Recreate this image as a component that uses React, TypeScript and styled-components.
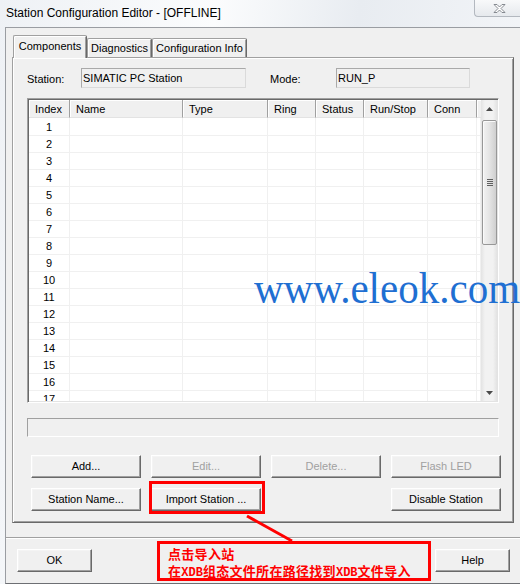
import React from 'react';
import styled, { createGlobalStyle } from 'styled-components';

const Global = createGlobalStyle`
  html, body { margin: 0; padding: 0; }
  body {
    width: 520px; height: 584px; overflow: hidden;
    background: #f3f5f8;
    font-family: "Liberation Sans", Arial, sans-serif;
    font-size: 11px; color: #000;
  }
`;

const Window = styled.div`
  position: relative;
  width: 520px;
  height: 584px;
  overflow: hidden;
  display: flex;
  flex-direction: column;
  background: linear-gradient(100deg, #eef1f5 0%, #fbfcfd 35%, #e8ecf1 58%, #f8f9fb 100%);
`;

const TitleBar = styled.div`
  height: 27px;
  flex: none;
  display: flex;
  align-items: flex-start;
  padding-left: 6px;
  box-sizing: border-box;
`;

const Title = styled.div`
  padding-top: 5px;
  font-size: 12px;
  line-height: 16px;
  color: #000;
`;

const CloseButton = styled.div`
  margin-left: auto;
  width: 46px;
  height: 17px;
  box-sizing: border-box;
  border: 1px solid #b3b8bf;
  border-top: none;
  border-right: none;
  border-bottom-left-radius: 4px;
  background: linear-gradient(#f8f9fa, #e6e9ed);
  display: flex;
  align-items: center;
  justify-content: center;
  padding-left: 4px;
`;

const Body = styled.div`
  flex: 1;
  margin-left: 5px;
  border-left: 1px solid #9a9da2;
  border-top: 1px solid #9a9da2;
  border-bottom: 1px solid #6d6f73;
  background: #f0f0f0;
  display: flex;
  flex-direction: column;
`;

const Upper = styled.div`
  padding: 7px 0 0 6px;
  display: flex;
  flex-direction: column;
`;

const TabStrip = styled.div`
  height: 22px;
  display: flex;
  align-items: flex-end;
  padding-left: 1px;
`;

const Tab = styled.div<{ $active?: boolean; $w: number }>`
  position: relative;
  z-index: ${(p) => (p.$active ? 1 : 0)};
  width: ${(p) => p.$w}px;
  height: ${(p) => (p.$active ? 23 : 19)}px;
  margin-bottom: ${(p) => (p.$active ? -1 : 0)}px;
  box-sizing: border-box;
  border-top: 1px solid #a0a0a0;
  border-left: 1px solid #a0a0a0;
  border-right: 1px solid #696969;
  box-shadow: inset 1px 1px #ffffff, inset -1px 0 #a0a0a0;
  border-radius: 2px 2px 0 0;
  background: #f0f0f0;
  display: flex;
  justify-content: center;
  padding-top: ${(p) => (p.$active ? 3 : 2)}px;
  line-height: 14px;
  white-space: nowrap;
`;

const Panel = styled.div`
  width: 502px;
  height: 466px;
  box-sizing: border-box;
  border-top: 1px solid #a0a0a0;
  border-left: 1px solid #a0a0a0;
  border-right: 1px solid #696969;
  border-bottom: 1px solid #696969;
  box-shadow: inset 1px 1px #ffffff, inset -1px -1px #a0a0a0;
  padding: 10px 14px 11px 14px;
  display: flex;
  flex-direction: column;
`;

const StationRow = styled.div`
  height: 20px;
  display: flex;
  align-items: center;
`;

const Label = styled.div<{ $w: number; $ml?: number }>`
  width: ${(p) => p.$w}px;
  margin-left: ${(p) => p.$ml || 0}px;
  flex: none;
  padding-top: 1px;
`;

const ReadField = styled.div<{ $w: number }>`
  width: ${(p) => p.$w}px;
  height: 20px;
  box-sizing: border-box;
  border: 1px solid;
  border-color: #a9a9a9 #dadada #dadada #a9a9a9;
  background: #f0f0f0;
  padding: 1px 0 0 1px;
  line-height: 17px;
  flex: none;
`;

const TableFrame = styled.div`
  margin-top: 10px;
  height: 305px;
  box-sizing: border-box;
  border: 1px solid;
  border-color: #a0a0a0 #ffffff #ffffff #a0a0a0;
  box-shadow: inset 1px 1px #696969, inset -1px -1px #e3e3e3;
  padding: 1px;
  display: flex;
  background: #fff;
`;

const List = styled.div`
  flex: 1;
  overflow: hidden;
  display: flex;
  flex-direction: column;
`;

const COLS = '41px 113px 85px 48px 48px 64px 49px 1fr';

const HeaderRow = styled.div`
  display: grid;
  grid-template-columns: ${COLS};
  height: 18px;
  flex: none;
  background: #f0f0f0;
`;

const HeaderCell = styled.div<{ $blank?: boolean }>`
  box-sizing: border-box;
  border-right: ${(p) => (p.$blank ? 'none' : '1px solid #a0a0a0')};
  border-bottom: 1px solid #e3e3e3;
  box-shadow: inset 1px 1px #ffffff;
  padding: 1px 0 0 6px;
  line-height: 16px;
  white-space: nowrap;
  overflow: hidden;
`;

const Row = styled.div`
  display: grid;
  grid-template-columns: ${COLS};
  height: 17px;
  flex: none;
`;

const Cell = styled.div<{ $center?: boolean }>`
  box-sizing: border-box;
  border-right: 1px solid #f0f0f0;
  border-bottom: 1px solid #f0f0f0;
  text-align: ${(p) => (p.$center ? 'center' : 'left')};
  padding-top: 1px;
  line-height: 16px;
`;

const ScrollBar = styled.div`
  width: 16px;
  flex: none;
  display: flex;
  flex-direction: column;
  background: linear-gradient(90deg, #e3e3e3, #f2f2f2 25%, #f2f2f2 75%, #e3e3e3);
`;

const ArrowBox = styled.div`
  height: 17px;
  flex: none;
  display: flex;
  align-items: center;
  justify-content: center;
`;

const Track = styled.div`
  flex: 1;
  padding-top: 3px;
  display: flex;
  flex-direction: column;
`;

const Thumb = styled.div`
  height: 125px;
  box-sizing: border-box;
  margin: 0 0 0 1px;
  width: 15px;
  border: 1px solid #979797;
  border-radius: 2px;
  background: linear-gradient(90deg, #f2f2f2, #e4e4e4 50%, #cfcfcf);
  box-shadow: inset 1px 1px #fafafa;
  display: flex;
  align-items: center;
  justify-content: center;
`;

const StatusField = styled.div`
  margin-top: 15px;
  height: 19px;
  box-sizing: border-box;
  border: 1px solid;
  border-color: #a0a0a0 #ffffff #ffffff #a0a0a0;
  background: #f0f0f0;
`;

const ButtonGrid = styled.div`
  margin: 18px 0 0 4px;
  display: grid;
  grid-template-columns: repeat(4, 110px);
  grid-auto-rows: 23px;
  column-gap: 10px;
  row-gap: 10px;
`;

const Button = styled.div<{ $disabled?: boolean; $col?: number; $w?: number }>`
  ${(p) => (p.$col ? `grid-column: ${p.$col};` : '')}
  ${(p) => (p.$w ? `width: ${p.$w}px;` : '')}
  height: 23px;
  box-sizing: border-box;
  border: 1px solid;
  border-color: #ffffff #696969 #696969 #ffffff;
  box-shadow: inset -1px -1px #a0a0a0, inset 1px 1px #f4f4f4;
  background: #f0f0f0;
  color: ${(p) => (p.$disabled ? '#a0a0a0' : '#000')};
  display: flex;
  align-items: center;
  justify-content: center;
  padding-bottom: 1px;
  white-space: nowrap;
`;

const Separator = styled.div`
  margin-top: 14px;
  height: 2px;
  box-sizing: border-box;
  border-top: 1px solid #a0a0a0;
  border-bottom: 1px solid #ffffff;
`;

const Footer = styled.div`
  margin-top: 10px;
  display: flex;
  padding: 0 10px 0 11px;
  justify-content: space-between;
`;

const Highlight = styled.div`
  position: absolute;
  left: 149px;
  top: 481px;
  width: 116px;
  height: 33px;
  box-sizing: border-box;
  border: 3px solid #ff0000;
  pointer-events: none;
`;

const Overlay = styled.svg`
  position: absolute;
  left: 0;
  top: 0;
  pointer-events: none;
`;

const Note = styled.div`
  position: absolute;
  left: 157px;
  top: 541px;
  width: 274px;
  height: 40px;
  box-sizing: border-box;
  border: 3px solid #ff0000;
  padding: 2px 0 0 8px;
  color: #ff0000;
  font-family: "Noto Sans CJK SC", "Noto Sans", sans-serif;
  font-weight: 700;
  font-size: 13px;
  white-space: nowrap;
  display: flex;
  flex-direction: column;
  gap: 2px;
`;

const NoteLine = styled.div`
  height: 15px;
  line-height: 15px;
  letter-spacing: 0.3px;
`;

const Latin = styled.span`
  font-family: "Liberation Mono", "DejaVu Sans Mono", monospace;
  font-size: 12px;
  letter-spacing: 0;
`;

const Watermark = styled.div`
  position: absolute;
  left: 254px;
  top: 270px;
  font-family: "Liberation Serif", "Times New Roman", serif;
  font-size: 41px;
  line-height: 41px;
  color: #1f6fd2;
  white-space: nowrap;
  pointer-events: none;
  transform: scaleY(1.08);
  transform-origin: left bottom;
`;

const headers = ['Index', 'Name', 'Type', 'Ring', 'Status', 'Run/Stop', 'Conn'];

const UpArrow = () => (
  <svg width="7" height="4" viewBox="0 0 7 4"><path d="M0 4 L3.5 0 L7 4 Z" fill="#4a4a4a" /></svg>
);
const DownArrow = () => (
  <svg width="7" height="4" viewBox="0 0 7 4"><path d="M0 0 L7 0 L3.5 4 Z" fill="#4a4a4a" /></svg>
);

export default function App() {
  const rows = Array.from({ length: 17 }, (_, i) => i + 1);
  return (
    <Window>
      <Global />
      <TitleBar>
        <Title>Station Configuration Editor - [OFFLINE]</Title>
        <CloseButton>
          <svg width="13" height="9" viewBox="0 0 13 9">
            <path
              d="M1 0.5 L4 0.5 L6.5 3 L9 0.5 L12 0.5 L8 4.5 L12 8.5 L9 8.5 L6.5 6 L4 8.5 L1 8.5 L5 4.5 Z"
              fill="#ffffff"
              stroke="#7a7f86"
              strokeWidth="0.9"
            />
          </svg>
        </CloseButton>
      </TitleBar>
      <Body>
        <Upper>
          <TabStrip>
            <Tab $active $w={74}>Components</Tab>
            <Tab $w={65}>Diagnostics</Tab>
            <Tab $w={95}>Configuration Info</Tab>
          </TabStrip>
          <Panel>
            <StationRow>
              <Label $w={54}>Station:</Label>
              <ReadField $w={165}>SIMATIC PC Station</ReadField>
              <Label $w={66} $ml={24}>Mode:</Label>
              <ReadField $w={134}>RUN_P</ReadField>
            </StationRow>
            <TableFrame>
              <List>
                <HeaderRow>
                  {headers.map((h) => (
                    <HeaderCell key={h}>{h}</HeaderCell>
                  ))}
                  <HeaderCell $blank />
                </HeaderRow>
                {rows.map((r) => (
                  <Row key={r}>
                    <Cell $center>{r}</Cell>
                    <Cell />
                    <Cell />
                    <Cell />
                    <Cell />
                    <Cell />
                    <Cell />
                    <Cell />
                  </Row>
                ))}
              </List>
              <ScrollBar>
                <ArrowBox><UpArrow /></ArrowBox>
                <Track>
                  <Thumb>
                    <svg width="6" height="7" viewBox="0 0 6 7">
                      <path d="M0 0.5 H6 M0 2.5 H6 M0 4.5 H6 M0 6.5 H6" stroke="#5f5f5f" strokeWidth="1" />
                    </svg>
                  </Thumb>
                </Track>
                <ArrowBox><DownArrow /></ArrowBox>
              </ScrollBar>
            </TableFrame>
            <StatusField />
            <ButtonGrid>
              <Button>Add...</Button>
              <Button $disabled>Edit...</Button>
              <Button $disabled>Delete...</Button>
              <Button $disabled>Flash LED</Button>
              <Button>Station Name...</Button>
              <Button>Import Station ...</Button>
              <Button $col={4}>Disable Station</Button>
            </ButtonGrid>
          </Panel>
        </Upper>
        <Separator />
        <Footer>
          <Button $w={75}>OK</Button>
          <Button $w={75}>Help</Button>
        </Footer>
      </Body>
      <Watermark>www.eleok.com</Watermark>
      <Highlight />
      <Overlay width="520" height="584" viewBox="0 0 520 584">
        <line x1="247" y1="516" x2="292" y2="541" stroke="#ff0000" strokeWidth="3" />
      </Overlay>
      <Note>
        <NoteLine>点击导入站</NoteLine>
        <NoteLine>
          在<Latin>XDB</Latin>组态文件所在路径找到<Latin>XDB</Latin>文件导入
        </NoteLine>
      </Note>
    </Window>
  );
}
